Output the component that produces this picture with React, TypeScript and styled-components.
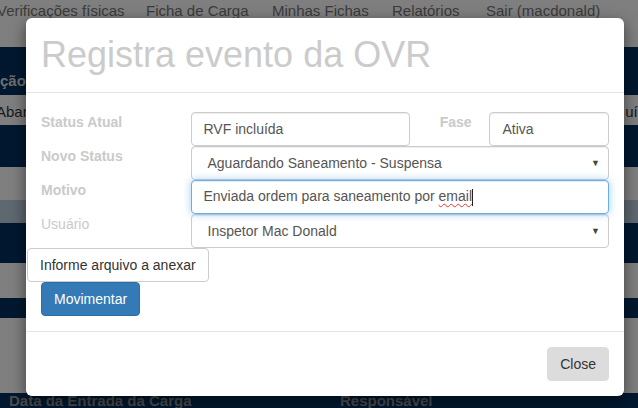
import React from "react";
import styled, { createGlobalStyle } from "styled-components";

const Global = createGlobalStyle`
  html, body { margin: 0; padding: 0; }
  body {
    width: 638px; height: 408px; overflow: hidden;
    font-family: "Liberation Sans", Arial, Helvetica, sans-serif;
    font-size: 14px; color: #333; background: #fff;
  }
  * { box-sizing: border-box; }
`;

const Page = styled.div`
  position: relative;
  width: 638px;
  height: 408px;
  overflow: hidden;
`;

const Navbar = styled.nav`
  height: 47px;
  background: #fff;
  display: flex;
  align-items: flex-start;
  padding-top: 2px;
  margin-left: -3px;
`;

const NavItem = styled.span<{ $w: number }>`
  flex: 0 0 ${(p) => p.$w}px;
  color: #777;
  font-size: 15px;
  line-height: 18px;
  white-space: nowrap;
`;

const Band = styled.div<{ $h: number; $bg: string }>`
  height: ${(p) => p.$h}px;
  background: ${(p) => p.$bg};
  display: flex;
  align-items: flex-end;
  justify-content: space-between;
  white-space: nowrap;
  overflow: hidden;
`;

const BandText = styled.span<{ $color: string; $bold?: boolean; $pad?: number }>`
  color: ${(p) => p.$color};
  font-weight: ${(p) => (p.$bold ? 700 : 400)};
  font-size: 15px;
  line-height: 20px;
  padding-bottom: ${(p) => p.$pad ?? 0}px;
`;

const TableHead = styled.div`
  height: 15px;
  background: #00305e;
  display: flex;
  white-space: nowrap;
  overflow: visible;
`;

const HeadCell = styled.span<{ $w: number }>`
  flex: 0 0 ${(p) => p.$w}px;
  color: #999;
  font-weight: 700;
  font-size: 15px;
  line-height: 20px;
  margin-top: -2px;
`;

const Backdrop = styled.div`
  position: absolute;
  inset: 0;
  background: rgba(0, 0, 0, 0.5);
`;

const Modal = styled.div`
  position: absolute;
  top: 18px;
  left: 26px;
  width: 598px;
  background: #fff;
  border-radius: 6px;
  box-shadow: 0 5px 15px rgba(0, 0, 0, 0.5);
  display: flex;
  flex-direction: column;
`;

const Header = styled.div`
  padding: 14px 15px 15px;
  border-bottom: 1px solid #e5e5e5;
`;

const Title = styled.h1`
  margin: 0;
  font-size: 36px;
  font-weight: 400;
  line-height: 45px;
  color: #cbcbcb;
`;

const Body = styled.div`
  padding: 19px 0 15px;
  display: flex;
  flex-direction: column;
`;

const FormRow = styled.div<{ $cols: string }>`
  display: grid;
  grid-template-columns: ${(p) => p.$cols};
  height: 34px;
`;

const Label = styled.label<{ $bold?: boolean }>`
  padding: 0 15px;
  min-width: 0;
  font-weight: ${(p) => (p.$bold ? 700 : 400)};
  color: #cacaca;
  font-size: 14px;
  line-height: 20px;
  white-space: nowrap;
`;

const Cell = styled.div`
  padding: 0 15px;
  min-width: 0;
`;

const Field = styled.div<{ $focus?: boolean; $select?: boolean }>`
  height: 34px;
  border: 1px solid ${(p) => (p.$focus ? "#66afe9" : "#ccc")};
  border-radius: 4px;
  background: #fff;
  box-shadow: ${(p) =>
    p.$focus
      ? "inset 0 1px 1px rgba(0,0,0,.075), 0 0 8px rgba(102,175,233,.6)"
      : "inset 0 1px 1px rgba(0,0,0,.075)"};
  padding: 0 ${(p) => (p.$select ? "8px 0 16px" : "12px")};
  display: flex;
  align-items: center;
  justify-content: space-between;
  font-size: 14px;
  color: #555;
  white-space: nowrap;
  position: relative;
  z-index: ${(p) => (p.$focus ? 1 : 0)};
`;

const Arrow = styled.span`
  font-size: 9px;
  color: #444;
`;

const Spell = styled.span`
  text-decoration: underline wavy #e33;
  text-decoration-thickness: 1px;
  text-underline-offset: 2px;
`;

const Caret = styled.span`
  display: inline-block;
  width: 1px;
  height: 17px;
  background: #222;
  vertical-align: middle;
`;

const ActionRow = styled.div<{ $pl: number }>`
  display: flex;
  padding-left: ${(p) => p.$pl}px;
`;

const Button = styled.button<{ $variant: "default" | "primary" | "muted" }>`
  height: 34px;
  padding: 6px 12px;
  font-family: inherit;
  font-size: 14px;
  line-height: 20px;
  border-radius: 4px;
  cursor: pointer;
  border: 1px solid
    ${(p) => (p.$variant === "primary" ? "#2e6da4" : p.$variant === "muted" ? "#dcdcdc" : "#ccc")};
  background: ${(p) => (p.$variant === "primary" ? "#337ab7" : p.$variant === "muted" ? "#dcdcdc" : "#fff")};
  color: ${(p) => (p.$variant === "primary" ? "#fff" : "#333")};
`;

const Footer = styled.div`
  border-top: 1px solid #e5e5e5;
  padding: 15px;
  display: flex;
  justify-content: flex-end;
`;

const COLS_TOP = "25% 41.6667% 8.3333% 25%";
const COLS_WIDE = "25% 75%";

export default function App() {
  return (
    <>
      <Global />
      <Page>
        <Navbar>
          <NavItem $w={149}>Verificações físicas</NavItem>
          <NavItem $w={126}>Ficha de Carga</NavItem>
          <NavItem $w={120}>Minhas Fichas</NavItem>
          <NavItem $w={94}>Relatórios</NavItem>
          <NavItem $w={160}>Sair (macdonald)</NavItem>
        </Navbar>
        <Band $h={48} $bg="#00305e">
          <BandText $color="#ddd" $bold $pad={4}>ção (</BandText>
        </Band>
        <Band $h={30} $bg="#fff">
          <BandText $color="#333" $pad={3} style={{ marginLeft: -4 }}>Aband</BandText>
          <BandText $color="#333" $pad={3} style={{ marginRight: -8 }}>uíd</BandText>
        </Band>
        <Band $h={42} $bg="#00305e" />
        <Band $h={33} $bg="#fff" />
        <Band $h={23} $bg="#bdd0e0" />
        <Band $h={40} $bg="#00305e" />
        <Band $h={35} $bg="#fff" />
        <Band $h={20} $bg="#00305e" />
        <Band $h={75} $bg="#fff" />
        <TableHead>
          <HeadCell $w={340} style={{ paddingLeft: 9 }}>Data da Entrada da Carga</HeadCell>
          <HeadCell $w={200}>Responsável</HeadCell>
        </TableHead>
        <Backdrop />
        <Modal>
          <Header>
            <Title>Registra evento da OVR</Title>
          </Header>
          <Body>
            <FormRow $cols={COLS_TOP}>
              <Label $bold>Status Atual</Label>
              <Cell>
                <Field>RVF incluída</Field>
              </Cell>
              <Label $bold>Fase</Label>
              <Cell>
                <Field>Ativa</Field>
              </Cell>
            </FormRow>
            <FormRow $cols={COLS_WIDE}>
              <Label $bold>Novo Status</Label>
              <Cell>
                <Field $select>
                  Aguardando Saneamento - Suspensa
                  <Arrow>▼</Arrow>
                </Field>
              </Cell>
            </FormRow>
            <FormRow $cols={COLS_WIDE}>
              <Label $bold>Motivo</Label>
              <Cell>
                <Field $focus>
                  <span>
                    Enviada ordem para saneamento por <Spell>email</Spell>
                    <Caret />
                  </span>
                </Field>
              </Cell>
            </FormRow>
            <FormRow $cols={COLS_WIDE}>
              <Label>Usuário</Label>
              <Cell>
                <Field $select>
                  Inspetor Mac Donald
                  <Arrow>▼</Arrow>
                </Field>
              </Cell>
            </FormRow>
            <ActionRow $pl={1}>
              <Button $variant="default">Informe arquivo a anexar</Button>
            </ActionRow>
            <ActionRow $pl={15}>
              <Button $variant="primary">Movimentar</Button>
            </ActionRow>
          </Body>
          <Footer>
            <Button $variant="muted">Close</Button>
          </Footer>
        </Modal>
      </Page>
    </>
  );
}
